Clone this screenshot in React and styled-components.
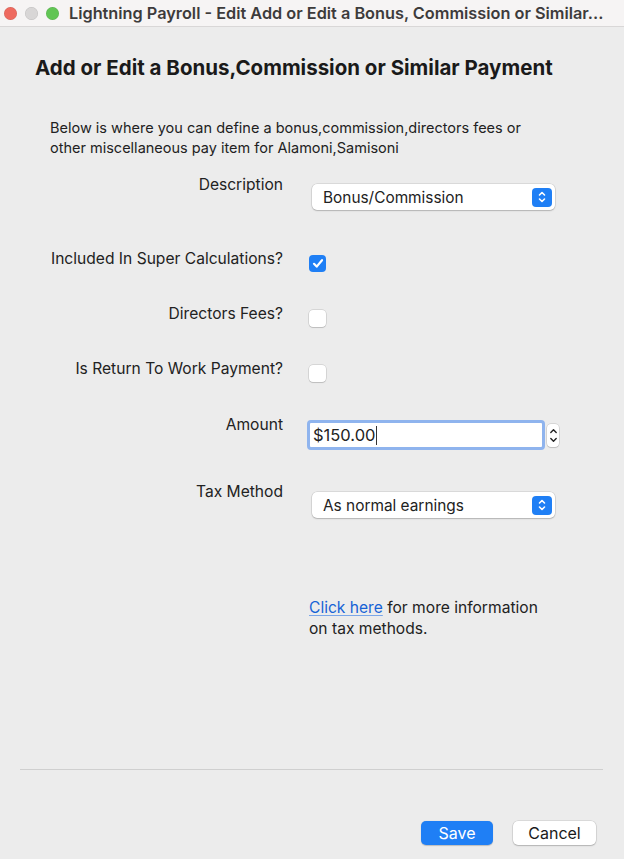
import React from "react";
import styled, { createGlobalStyle } from "styled-components";

const GlobalStyle = createGlobalStyle`
  html, body {
    margin: 0;
    padding: 0;
    background: #ececec;
  }
  body {
    font-family: "Inter", "Liberation Sans", Arial, sans-serif;
    color: #222;
  }
`;

const Window = styled.div`
  display: flex;
  flex-direction: column;
  width: 624px;
  height: 859px;
  background: #ececec;
  overflow: hidden;
`;

const TitleBar = styled.div`
  display: flex;
  align-items: center;
  height: 26px;
  padding-left: 4px;
  background: #f6f4f4;
  border-bottom: 1px solid #d9d7d7;
  flex-shrink: 0;
`;

const Lights = styled.div`
  display: flex;
  gap: 8px;
  margin-right: 10px;
`;

const Light = styled.span`
  width: 13px;
  height: 13px;
  border-radius: 50%;
  background: ${(p) => p.$color};
  box-shadow: inset 0 0 0 0.5px rgba(0, 0, 0, 0.12);
`;

const WindowTitle = styled.div`
  font-size: 16.3px;
  font-weight: 600;
  color: #3d3b3b;
  white-space: nowrap;
  overflow: hidden;
`;

const Content = styled.div`
  flex: 1;
  padding: 29px 0 0 0;
`;

const Heading = styled.h1`
  margin: 0 0 38px 35px;
  font-size: 20.5px;
  line-height: 24px;
  font-weight: 700;
  color: #1a1a1a;
`;

const Intro = styled.p`
  margin: 0 0 18px 50px;
  font-size: 14.5px;
  line-height: 20px;
`;

const Row = styled.div`
  display: grid;
  grid-template-columns: 283px 1fr;
  column-gap: 24px;
  align-items: start;
  height: ${(p) => p.$h}px;
`;

const Label = styled.div`
  text-align: right;
  font-size: 15.6px;
  line-height: 18px;
  white-space: nowrap;
`;

const Cell = styled.div`
  display: flex;
  align-items: flex-start;
  padding-top: ${(p) => p.$top || 0}px;
  padding-left: ${(p) => p.$left || 0}px;
`;

const Select = styled.div`
  display: flex;
  align-items: center;
  justify-content: space-between;
  box-sizing: border-box;
  width: 243px;
  height: 26px;
  padding: 0 3px 0 11px;
  background: #fff;
  border-radius: 5px;
  box-shadow: 0 0 0 0.5px rgba(0, 0, 0, 0.15), 0 1px 1.5px rgba(0, 0, 0, 0.18);
  font-size: 15.4px;
`;

const SelectArrows = styled.span`
  display: flex;
  align-items: center;
  justify-content: center;
  width: 20px;
  height: 19px;
  border-radius: 4px;
  background: #1f7ff5;
`;

const Check = styled.span`
  display: flex;
  align-items: center;
  justify-content: center;
  box-sizing: border-box;
  width: 17px;
  height: 17px;
  border-radius: 4px;
  background: ${(p) => (p.$checked ? "#1f7ff5" : "#fff")};
  box-shadow: ${(p) =>
    p.$checked
      ? "none"
      : "0 0 0 0.5px rgba(0,0,0,0.18), 0 1px 1px rgba(0,0,0,0.12)"};
`;

const FieldWrap = styled.div`
  display: flex;
  align-items: center;
  gap: 2px;
`;

const Field = styled.div`
  box-sizing: border-box;
  display: flex;
  align-items: center;
  width: 238px;
  height: 30px;
  padding-left: 3px;
  background: #fff;
  border-radius: 4px;
  border: 3px solid #8fb4ee;
  font-size: 16.5px;
`;

const Caret = styled.span`
  display: inline-block;
  width: 1px;
  height: 19px;
  background: #333;
  margin-left: 1px;
`;

const Stepper = styled.span`
  display: flex;
  flex-direction: column;
  align-items: center;
  justify-content: center;
  width: 12px;
  height: 23px;
  background: #fff;
  border-radius: 4px;
  box-shadow: 0 0 0 0.5px rgba(0, 0, 0, 0.18), 0 1px 1px rgba(0, 0, 0, 0.12);
`;

const Help = styled.p`
  margin: 0 0 0 2px;
  font-size: 15.6px;
  line-height: 21px;
  white-space: nowrap;
`;

const Link = styled.a`
  color: #1763d6;
  text-decoration: underline;
  text-decoration-color: #7aa6e8;
  text-underline-offset: 2px;
`;

const Divider = styled.hr`
  margin: 0 21px 0 20px;
  border: 0;
  border-top: 1px solid #cfcfcf;
`;

const Footer = styled.div`
  display: flex;
  justify-content: flex-end;
  gap: 20px;
  padding: 51px 28px 14px 0;
`;

const Button = styled.button`
  box-sizing: border-box;
  height: 24px;
  width: ${(p) => p.$w}px;
  border: 0;
  border-radius: 5px;
  font-family: inherit;
  font-size: 16px;
  color: ${(p) => (p.$primary ? "#fff" : "#1a1a1a")};
  background: ${(p) => (p.$primary ? "#1f7ff5" : "#fff")};
  box-shadow: ${(p) =>
    p.$primary
      ? "0 0.5px 1px rgba(0,0,0,0.2)"
      : "0 0 0 0.5px rgba(0,0,0,0.15), 0 1px 1.5px rgba(0,0,0,0.18)"};
`;

function UpDown() {
  return (
    <svg width="10" height="14" viewBox="0 0 10 14" fill="none">
      <path d="M2.5 5L5 2.5L7.5 5" stroke="#fff" strokeWidth="1.6" strokeLinecap="round" strokeLinejoin="round" />
      <path d="M2.5 9L5 11.5L7.5 9" stroke="#fff" strokeWidth="1.6" strokeLinecap="round" strokeLinejoin="round" />
    </svg>
  );
}

function Tick() {
  return (
    <svg width="12" height="11" viewBox="0 0 12 11" fill="none">
      <path d="M2 5.8L4.7 8.6L10 2.2" stroke="#fff" strokeWidth="2.2" strokeLinecap="round" strokeLinejoin="round" />
    </svg>
  );
}

function StepArrows() {
  return (
    <svg width="9" height="19" viewBox="0 0 9 19" fill="none">
      <path d="M1.8 6.5L4.5 3.8L7.2 6.5" stroke="#222" strokeWidth="1.4" strokeLinecap="round" strokeLinejoin="round" />
      <path d="M1.8 12.5L4.5 15.2L7.2 12.5" stroke="#222" strokeWidth="1.4" strokeLinecap="round" strokeLinejoin="round" />
    </svg>
  );
}

const checkRows = [
  { label: "Included In Super Calculations?", checked: true, h: 55 },
  { label: "Directors Fees?", checked: false, h: 55 },
  { label: "Is Return To Work Payment?", checked: false, h: 56 },
];

export default function App() {
  return (
    <Window>
      <GlobalStyle />
      <TitleBar>
        <Lights>
          <Light $color="#ee6a5f" />
          <Light $color="#d8d6d6" />
          <Light $color="#61c554" />
        </Lights>
        <WindowTitle>
          Lightning Payroll - Edit Add or Edit a Bonus, Commission or Similar...
        </WindowTitle>
      </TitleBar>

      <Content>
        <Heading>Add or Edit a Bonus,Commission or Similar Payment</Heading>
        <Intro>
          Below is where you can define a bonus,commission,directors fees or
          <br />
          other miscellaneous pay item for Alamoni,Samisoni
        </Intro>

        <Row $h={74}>
          <Label>Description</Label>
          <Cell $top={8} $left={5}>
            <Select>
              Bonus/Commission
              <SelectArrows>
                <UpDown />
              </SelectArrows>
            </Select>
          </Cell>
        </Row>

        {checkRows.map((r) => (
          <Row key={r.label} $h={r.h}>
            <Label>{r.label}</Label>
            <Cell $top={5} $left={2}>
              <Check $checked={r.checked}>{r.checked && <Tick />}</Check>
            </Cell>
          </Row>
        ))}

        <Row $h={67}>
          <Label>Amount</Label>
          <Cell $top={4}>
            <FieldWrap>
              <Field>
                $150.00
                <Caret />
              </Field>
              <Stepper>
                <StepArrows />
              </Stepper>
            </FieldWrap>
          </Cell>
        </Row>

        <Row $h={114}>
          <Label>Tax Method</Label>
          <Cell $top={9} $left={5}>
            <Select>
              As normal earnings
              <SelectArrows>
                <UpDown />
              </SelectArrows>
            </Select>
          </Cell>
        </Row>

        <Row $h={50}>
          <div />
          <Help>
            <Link href="#">Click here</Link> for more information
            <br />
            on tax methods.
          </Help>
        </Row>
      </Content>

      <Divider />
      <Footer>
        <Button $primary $w={72}>
          Save
        </Button>
        <Button $w={83}>Cancel</Button>
      </Footer>
    </Window>
  );
}
